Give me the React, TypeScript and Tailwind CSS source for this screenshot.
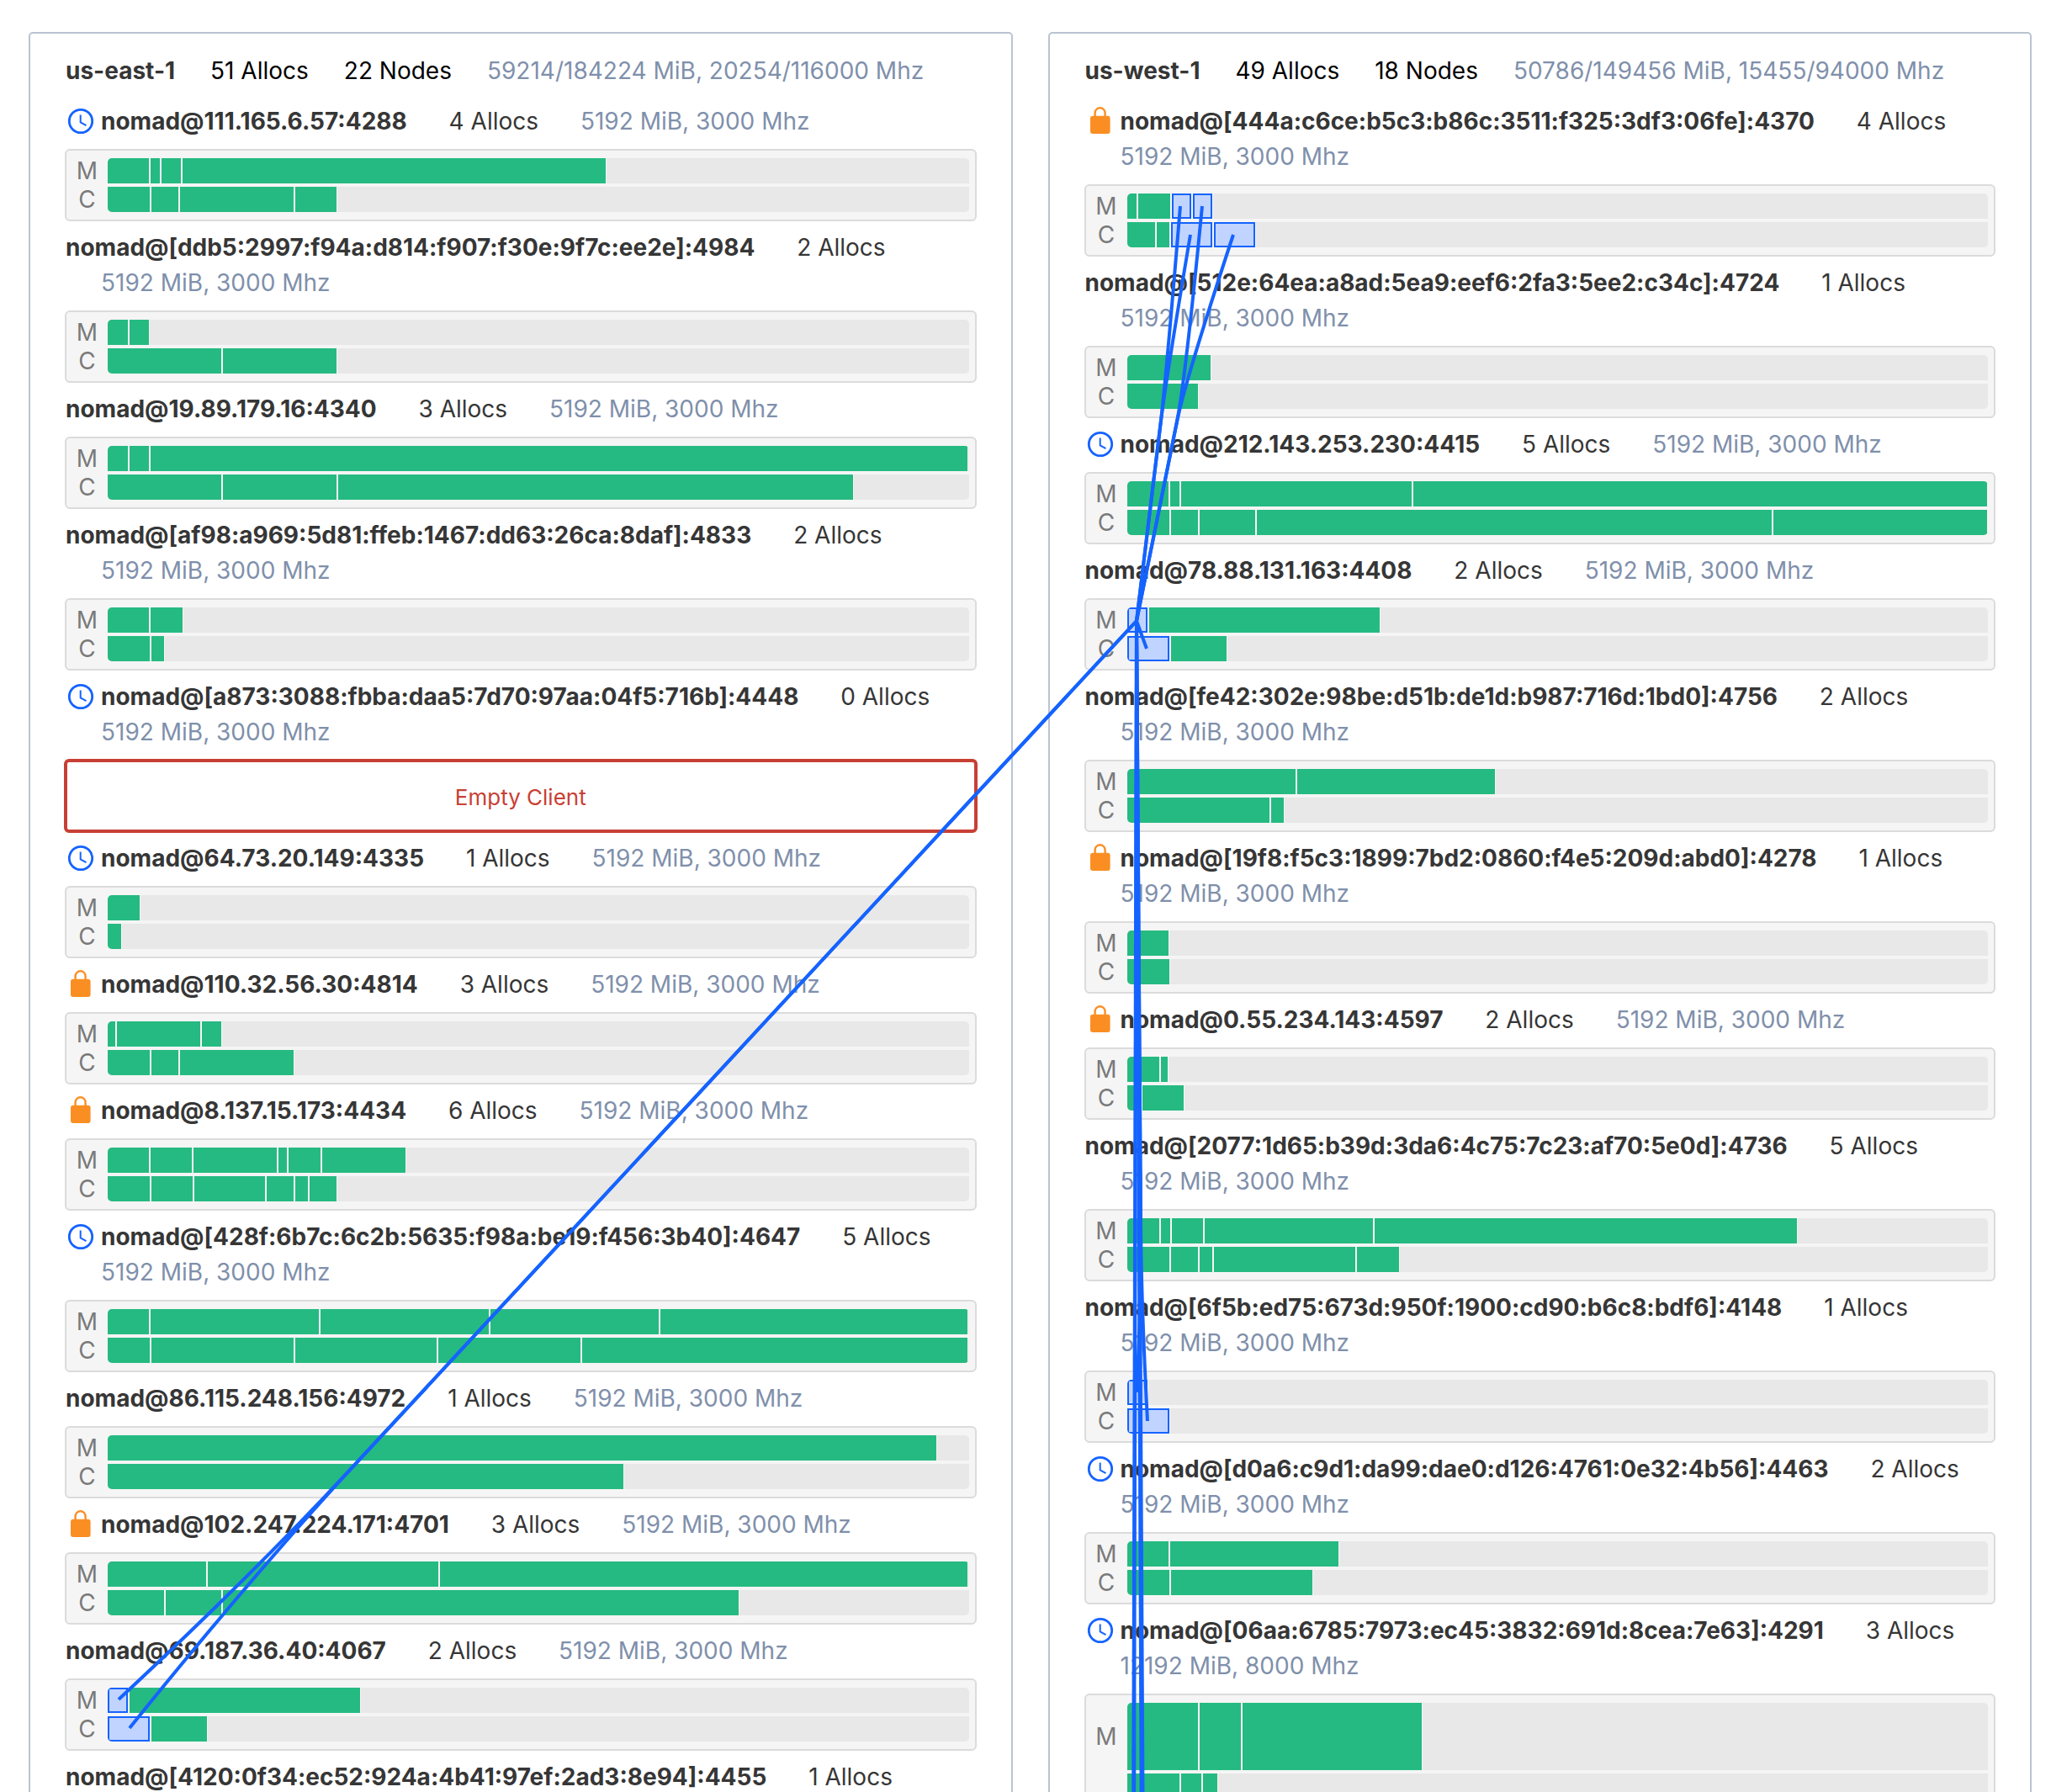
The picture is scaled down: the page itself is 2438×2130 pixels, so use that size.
type Alloc = number | { size: number; selected: true };
type Icon = "clock" | "lock";

interface Client {
  name: string;
  allocs: number;
  memory?: number;
  cpu?: number;
  icon?: Icon;
  m?: Alloc[];
  c?: Alloc[];
  tall?: boolean;
  empty?: boolean;
}

interface Datacenter {
  name: string;
  allocs: number;
  nodes: number;
  usage: string;
  clients: Client[];
}

const sel = (size: number): Alloc => ({ size, selected: true });
const small = { memory: 5192, cpu: 3000 };

const datacenters: Datacenter[] = [
  {
    name: "us-east-1",
    allocs: 51,
    nodes: 22,
    usage: "59214/184224 MiB, 20254/116000 Mhz",
    clients: [
      { ...small, name: "nomad@111.165.6.57:4288", icon: "clock", allocs: 4, m: [256, 64, 128, 2560], c: [150, 100, 400, 150] },
      { ...small, name: "nomad@[ddb5:2997:f94a:d814:f907:f30e:9f7c:ee2e]:4984", allocs: 2, m: [128, 128], c: [400, 400] },
      { ...small, name: "nomad@19.89.179.16:4340", allocs: 3, m: [128, 128, 4936], c: [400, 400, 1800] },
      { ...small, name: "nomad@[af98:a969:5d81:ffeb:1467:dd63:26ca:8daf]:4833", allocs: 2, m: [256, 200], c: [150, 50] },
      { ...small, name: "nomad@[a873:3088:fbba:daa5:7d70:97aa:04f5:716b]:4448", icon: "clock", allocs: 0, empty: true },
      { ...small, name: "nomad@64.73.20.149:4335", icon: "clock", allocs: 1, m: [200], c: [50] },
      { ...small, name: "nomad@110.32.56.30:4814", icon: "lock", allocs: 3, m: [50, 512, 128], c: [150, 100, 400] },
      { ...small, name: "nomad@8.137.15.173:4434", icon: "lock", allocs: 6, m: [256, 256, 512, 64, 200, 512], c: [150, 150, 250, 100, 50, 100] },
      { ...small, name: "nomad@[428f:6b7c:6c2b:5635:f98a:be19:f456:3b40]:4647", icon: "clock", allocs: 5, m: [256, 1024, 1024, 1024, 1864], c: [150, 500, 500, 500, 1350] },
      { ...small, name: "nomad@86.115.248.156:4972", allocs: 1, m: [5000], c: [1800] },
      { ...small, name: "nomad@102.247.224.171:4701", icon: "lock", allocs: 3, m: [600, 1400, 3192], c: [200, 200, 1800] },
      { ...small, name: "nomad@69.187.36.40:4067", allocs: 2, m: [sel(128), 1400], c: [sel(150), 200] },
      { name: "nomad@[4120:0f34:ec52:924a:4b41:97ef:2ad3:8e94]:4455", allocs: 1 },
    ],
  },
  {
    name: "us-west-1",
    allocs: 49,
    nodes: 18,
    usage: "50786/149456 MiB, 15455/94000 Mhz",
    clients: [
      { ...small, name: "nomad@[444a:c6ce:b5c3:b86c:3511:f325:3df3:06fe]:4370", icon: "lock", allocs: 4, m: [64, 200, sel(128), sel(128)], c: [100, 50, sel(150), sel(150)] },
      { ...small, name: "nomad@[512e:64ea:a8ad:5ea9:eef6:2fa3:5ee2:c34c]:4724", allocs: 1, m: [512], c: [250] },
      { ...small, name: "nomad@212.143.253.230:4415", icon: "clock", allocs: 5, m: [256, 64, 1400, 3472], c: [150, 100, 200, 1800, 750] },
      { ...small, name: "nomad@78.88.131.163:4408", allocs: 2, m: [sel(128), 1400], c: [sel(150), 200] },
      { ...small, name: "nomad@[fe42:302e:98be:d51b:de1d:b987:716d:1bd0]:4756", allocs: 2, m: [1024, 1200], c: [500, 50] },
      { ...small, name: "nomad@[19f8:f5c3:1899:7bd2:0860:f4e5:209d:abd0]:4278", icon: "lock", allocs: 1, m: [256], c: [150] },
      { ...small, name: "nomad@0.55.234.143:4597", icon: "lock", allocs: 2, m: [200, 50], c: [50, 150] },
      { ...small, name: "nomad@[2077:1d65:b39d:3da6:4c75:7c23:af70:5e0d]:4736", allocs: 5, m: [200, 64, 200, 1024, 2560], c: [150, 100, 50, 500, 150] },
      { ...small, name: "nomad@[6f5b:ed75:673d:950f:1900:cd90:b6c8:bdf6]:4148", allocs: 1, m: [sel(128)], c: [sel(150)] },
      { ...small, name: "nomad@[d0a6:c9d1:da99:dae0:d126:4761:0e32:4b56]:4463", icon: "clock", allocs: 2, m: [256, 1024], c: [150, 500] },
      { name: "nomad@[06aa:6785:7973:ec45:3832:691d:8cea:7e63]:4291", icon: "clock", allocs: 3, memory: 12192, cpu: 8000, m: [1024, 600, 2560], c: [500, 200, 150], tall: true },
    ],
  },
];

function ClockIcon() {
  return (
    <svg viewBox="0 0 36 36" className="size-9" fill="none" stroke="#1563ff" role="img" aria-label="Client is draining">
      <circle cx="18" cy="18" r="13.7" strokeWidth="2.8" />
      <path d="M17.7 10.5v8.8l6.8 3.9" strokeWidth="2" />
    </svg>
  );
}

function LockIcon() {
  return (
    <svg viewBox="0 0 36 36" className="size-9" role="img" aria-label="Client is ineligible">
      <path d="M11.6 13V8.4a6 6.2 0 0 1 12 0V13" fill="none" stroke="#fa8e23" strokeWidth="2.4" />
      <rect x="6" y="11.7" width="23.6" height="21.3" rx="3" fill="#fa8e23" />
    </svg>
  );
}

function Bar({ label, allocs, capacity }: { label: string; allocs: Alloc[]; capacity: number }) {
  return (
    <div className="flex flex-1 bg-[#e8e8e8]" role="img" aria-label={label}>
      {allocs.map((alloc, i) => {
        const selected = typeof alloc === "object";
        const size = selected ? alloc.size : alloc;
        return (
          <div
            key={i}
            className="shrink-0 border-r border-[#f5f5f5] bg-[#f5f5f5] not-first:border-l"
            style={{ width: `${(size / capacity) * 100}%` }}
          >
            <div className={selected ? "h-full border-2 border-[#1563ff] bg-[#c1d4ff]" : "h-full bg-[#25ba81]"} />
          </div>
        );
      })}
    </div>
  );
}

function Chart({ client }: { client: Client }) {
  if (client.empty) {
    return (
      <div className="-m-0.5 flex h-[88px] items-center justify-center rounded-md border-4 border-[#c84034] pt-1 text-[26px] text-[#c84034]">
        Empty Client
      </div>
    );
  }
  if (!client.m || !client.c || !client.memory || !client.cpu) return null;
  return (
    <div
      className={`-m-px flex rounded-md border-2 border-[#dbdbdb] bg-[#f5f5f5] py-[9px] pr-[7px] ${client.tall ? "h-[186px]" : "h-[86px]"}`}
    >
      <div className="flex w-[49px] flex-col gap-1 text-center text-[28px] text-[#7a7a7a]">
        <span className="flex flex-1 items-center justify-center leading-none">M</span>
        <span className="flex flex-1 items-center justify-center leading-none">C</span>
      </div>
      <div className="flex flex-1 flex-col gap-1 overflow-hidden rounded-[5px]">
        <Bar label="Memory" allocs={client.m} capacity={client.memory} />
        <Bar label="CPU" allocs={client.c} capacity={client.cpu} />
      </div>
    </div>
  );
}

function ClientNode({ client }: { client: Client }) {
  return (
    <li className="mb-[11px]">
      <p className="mb-[13px] text-[#363636]">
        {client.icon && (
          <span className="inline-flex h-[42px] w-[42px] items-center align-top">
            {client.icon === "clock" ? <ClockIcon /> : <LockIcon />}
          </span>
        )}
        <strong className="font-bold">{client.name}</strong>{" "}
        <span className="ml-[42px] inline-block">{client.allocs} Allocs</span>{" "}
        {client.memory && (
          <span className="ml-[42px] inline-block text-[#7f90ab]">
            {client.memory} MiB, {client.cpu} Mhz
          </span>
        )}
      </p>
      <Chart client={client} />
    </li>
  );
}

function DatacenterPanel({ dc }: { dc: Datacenter }) {
  return (
    <section className="min-w-0 flex-1 rounded-[5px] border-2 border-[#bac4d1] px-[42px] pt-[23px]">
      <header className="mb-[18px] flex gap-[42px] text-black">
        <h2 className="font-bold text-[#363636]">{dc.name}</h2>
        <span>{dc.allocs} Allocs</span>
        <span>{dc.nodes} Nodes</span>
        <span className="text-[#7f90ab]">{dc.usage}</span>
      </header>
      <ul>
        {dc.clients.map((client) => (
          <ClientNode key={client.name} client={client} />
        ))}
      </ul>
    </section>
  );
}

type Point = [number, number];

interface Pair {
  memory: Point;
  cpu: Point;
  fork: number;
}

const origin: Point = [1351, 738];

// Memory and CPU centers of each associated allocation, and how far along the trunk they part.
const pairs: Pair[] = [
  { memory: [1403, 245], cpu: [1415, 279], fork: 0.5 },
  { memory: [1429, 245], cpu: [1466, 279], fork: 0.5 },
  { memory: [141, 2020], cpu: [154, 2054], fork: 0.77 },
  { memory: [1351, 1655], cpu: [1364, 1689], fork: 0.77 },
];

const straight: Point[] = [
  [1363, 771],
  [1347, 2230],
  [1348, 2230],
  [1357, 2230],
  [1359, 2230],
];

// Follows the trunk shared by the pair, then bends away to its own end.
function branch({ memory, cpu, fork }: Pair, end: Point) {
  const dx = (memory[0] + cpu[0]) / 2 - origin[0];
  const dy = (memory[1] + cpu[1]) / 2 - origin[1];
  const along = (t: number) => `${origin[0] + dx * t} ${origin[1] + dy * t}`;
  return `M${along(0)}L${along(fork)}Q${along(fork + 0.1)} ${end.join(" ")}`;
}

function Associations() {
  return (
    <svg
      className="pointer-events-none absolute inset-0 size-full"
      fill="none"
      stroke="#1563ff"
      strokeWidth="4"
      aria-hidden="true"
    >
      {pairs.map((pair) =>
        [pair.memory, pair.cpu].map((end) => <path key={end.join()} d={branch(pair, end)} />),
      )}
      {straight.map(([x, y]) => (
        <line key={`${x},${y}`} x1={origin[0]} y1={origin[1]} x2={x} y2={y} />
      ))}
    </svg>
  );
}

export default function App() {
  return (
    <main className="relative h-screen overflow-hidden bg-white font-[Inter,sans-serif] text-[28px] leading-[42px]">
      <div className="flex items-start gap-[42px] pt-[38px] pr-[23px] pl-[34px]">
        {datacenters.map((dc) => (
          <DatacenterPanel key={dc.name} dc={dc} />
        ))}
      </div>
      <Associations />
    </main>
  );
}
